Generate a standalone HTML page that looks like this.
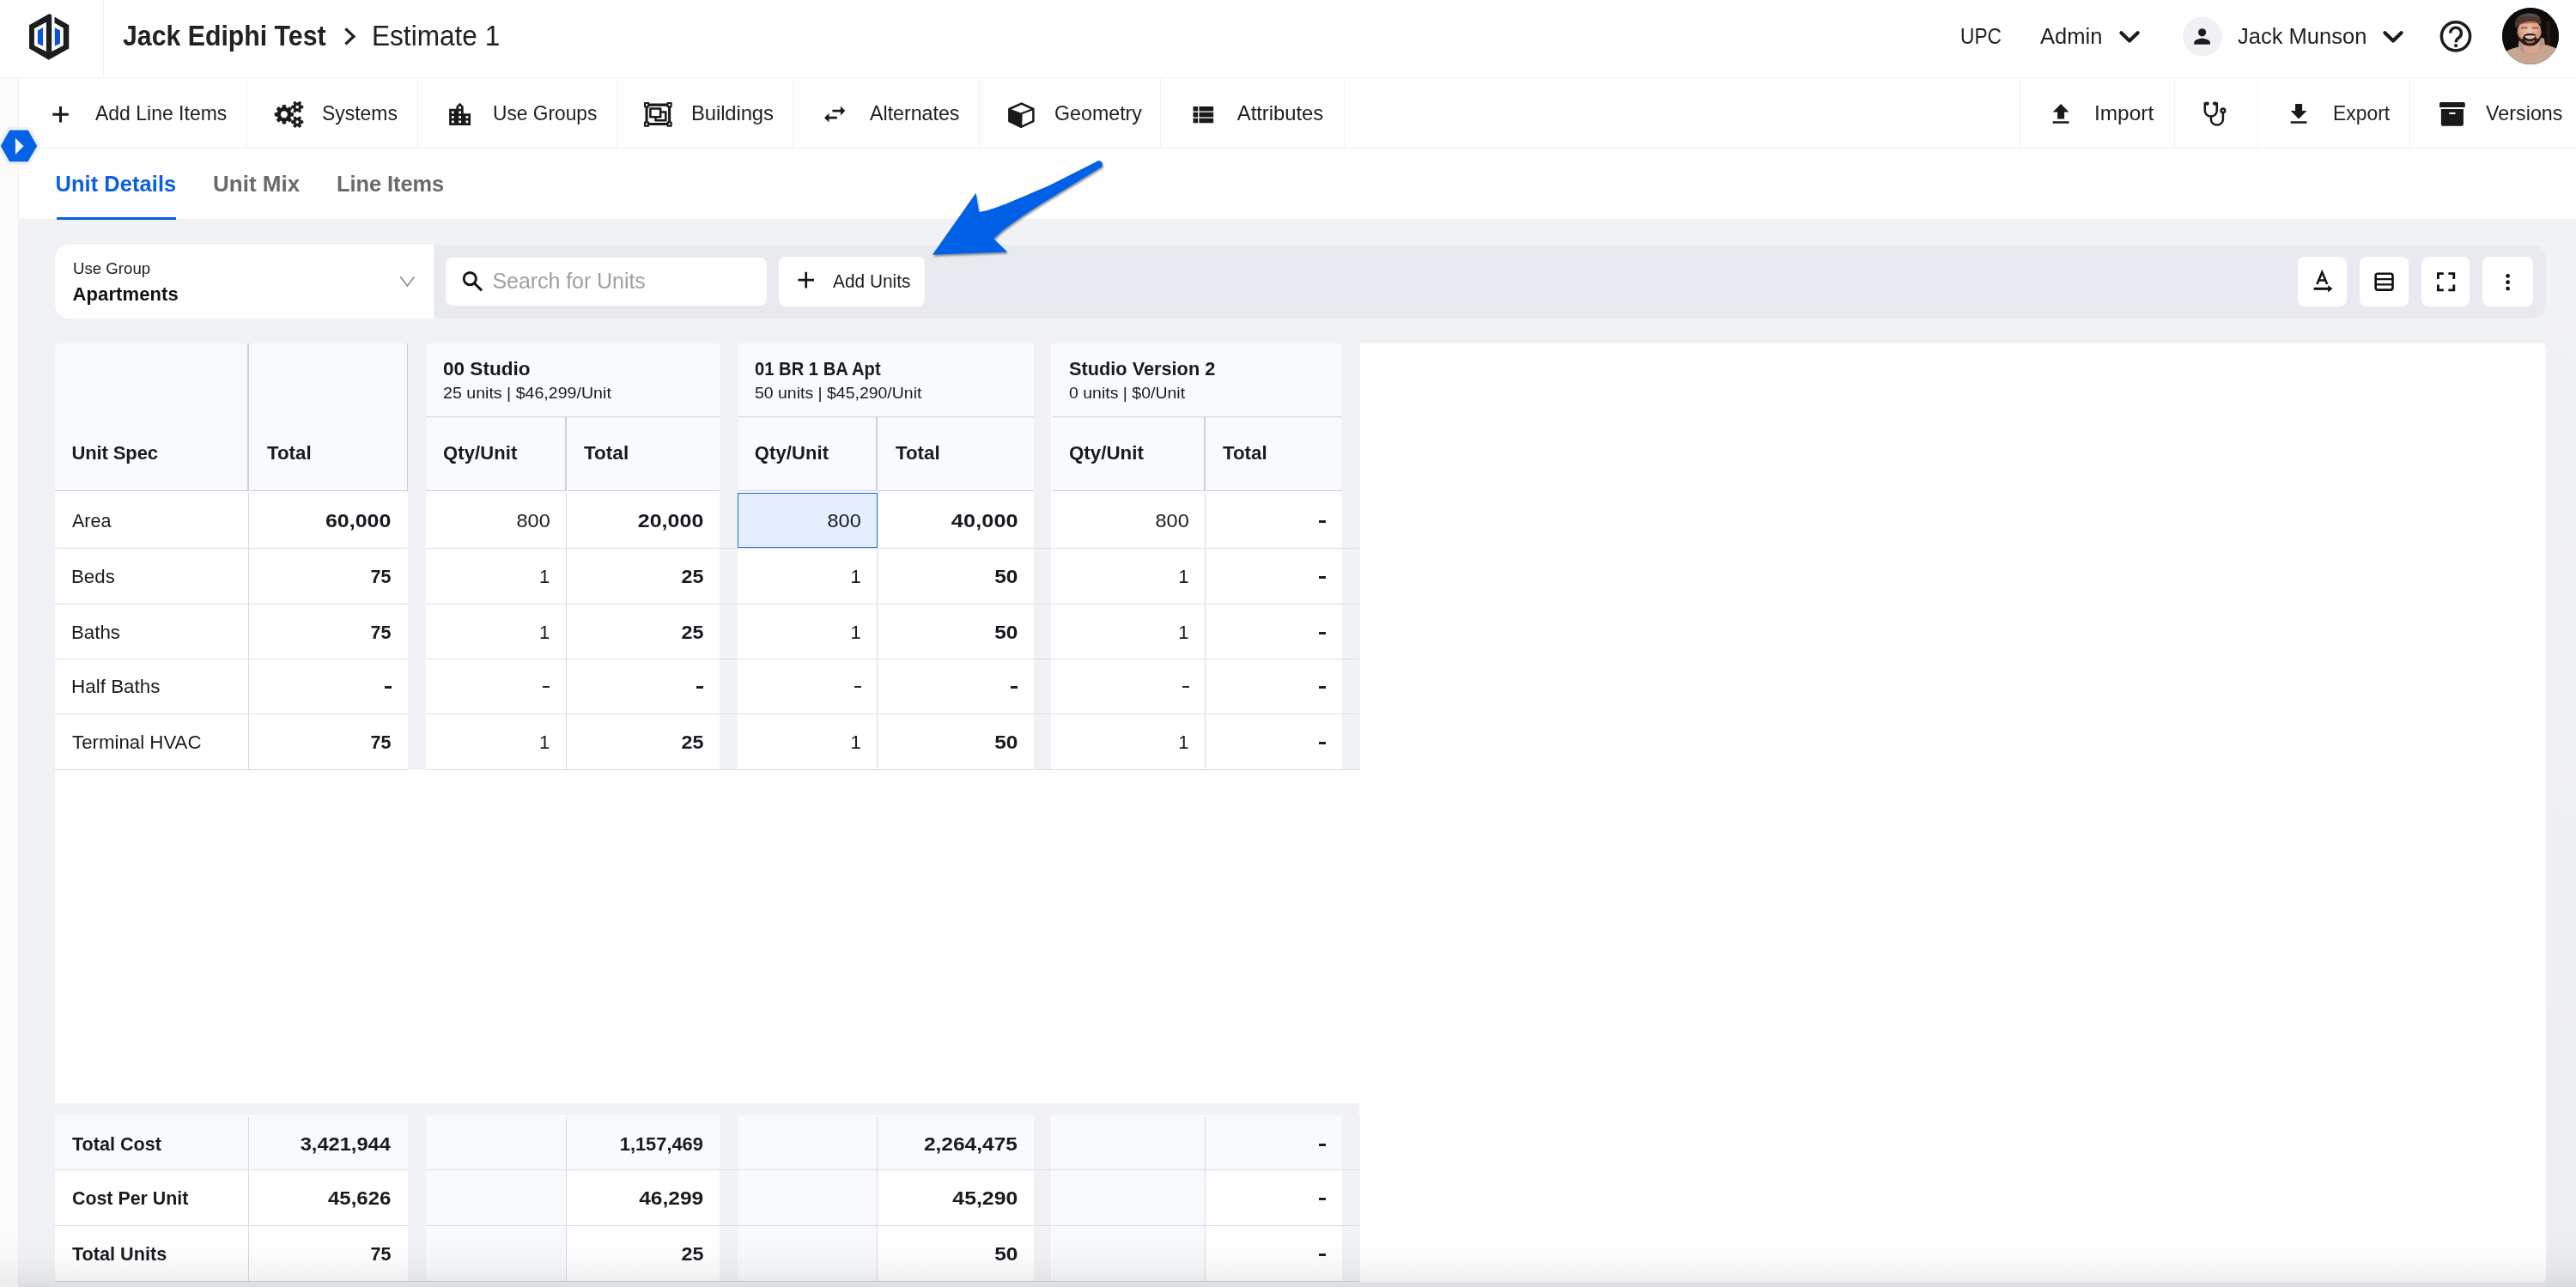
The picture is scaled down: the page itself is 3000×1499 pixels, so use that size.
<!DOCTYPE html>
<html lang="en"><head><meta charset="utf-8"><title>Estimate 1 - Unit Details</title>
<style>
html,body{margin:0;padding:0}
body{width:3000px;height:1499px;position:relative;overflow:hidden;background:#f1f2f6;font-family:"Liberation Sans", sans-serif;color:#171b20}
.abs{position:absolute;display:block}
.t{position:absolute;white-space:pre;line-height:1;display:block}
.txt{left:0;top:0;width:3000px;height:1499px;will-change:transform}
</style></head>
<body>
<!-- layout boxes -->
<div class="abs" style="left:0px;top:0px;width:3000px;height:90px;background:#fff"></div>
<div class="abs" style="left:0px;top:90px;width:3000px;height:1px;background:#eff0f4"></div>
<div class="abs" style="left:120px;top:0px;width:1px;height:90px;background:#f1f2f5"></div>
<div class="abs" style="left:0px;top:91px;width:3000px;height:81px;background:#fefefe"></div>
<div class="abs" style="left:0px;top:172px;width:3000px;height:1px;background:#eeeff3"></div>
<div class="abs" style="left:0px;top:173px;width:3000px;height:82px;background:#fefefe"></div>
<div class="abs" style="left:0px;top:91px;width:21px;height:1408px;background:#fbfbfc"></div>
<div class="abs" style="left:21px;top:91px;width:1px;height:1408px;background:#eff0f4"></div>
<div class="abs" style="left:287px;top:91px;width:1px;height:81px;background:#f0f1f5"></div>
<div class="abs" style="left:486px;top:91px;width:1px;height:81px;background:#f0f1f5"></div>
<div class="abs" style="left:718px;top:91px;width:1px;height:81px;background:#f0f1f5"></div>
<div class="abs" style="left:923px;top:91px;width:1px;height:81px;background:#f0f1f5"></div>
<div class="abs" style="left:1140px;top:91px;width:1px;height:81px;background:#f0f1f5"></div>
<div class="abs" style="left:1351px;top:91px;width:1px;height:81px;background:#f0f1f5"></div>
<div class="abs" style="left:1564.5px;top:91px;width:1px;height:81px;background:#f0f1f5"></div>
<div class="abs" style="left:2351.5px;top:91px;width:1px;height:81px;background:#f0f1f5"></div>
<div class="abs" style="left:2531.5px;top:91px;width:1px;height:81px;background:#f0f1f5"></div>
<div class="abs" style="left:2628.5px;top:91px;width:1px;height:81px;background:#f0f1f5"></div>
<div class="abs" style="left:2806.4px;top:91px;width:1px;height:81px;background:#f0f1f5"></div>
<div class="abs" style="left:65.5px;top:252.5px;width:139.5px;height:3.5px;background:#0b5fe4"></div>
<div class="abs" style="left:64px;top:285px;width:2901px;height:86px;background:#e9eaef;border-radius:16px"></div>
<div class="abs" style="left:64px;top:285px;width:440.5px;height:86px;background:#fff;border-radius:16px 0 0 16px"></div>
<div class="abs" style="left:519px;top:300px;width:373.5px;height:56px;background:#fff;border-radius:8px"></div>
<div class="abs" style="left:907px;top:298.8px;width:170px;height:58.4px;background:#fff;border-radius:8px"></div>
<div class="abs" style="left:2676px;top:299.2px;width:57px;height:58px;background:#fff;border-radius:8px"></div>
<div class="abs" style="left:2748.2px;top:299.2px;width:57px;height:58px;background:#fff;border-radius:8px"></div>
<div class="abs" style="left:2820px;top:299.2px;width:56.2px;height:58px;background:#fff;border-radius:8px"></div>
<div class="abs" style="left:2891px;top:299.2px;width:59px;height:58px;background:#fff;border-radius:8px"></div>
<div class="abs" style="left:64px;top:400px;width:2901px;height:1092.5px;background:#fff;border-radius:6px"></div>
<div class="abs" style="left:474.5px;top:400px;width:21.5px;height:497px;background:#f1f2f6"></div>
<div class="abs" style="left:474.5px;top:1299px;width:21.5px;height:193.5px;background:#f1f2f6"></div>
<div class="abs" style="left:837.5px;top:400px;width:21.3px;height:497px;background:#f1f2f6"></div>
<div class="abs" style="left:837.5px;top:1299px;width:21.3px;height:193.5px;background:#f1f2f6"></div>
<div class="abs" style="left:1203.8px;top:400px;width:20.7px;height:497px;background:#f1f2f6"></div>
<div class="abs" style="left:1203.8px;top:1299px;width:20.7px;height:193.5px;background:#f1f2f6"></div>
<div class="abs" style="left:1562.5px;top:400px;width:21.4px;height:497px;background:#f1f2f6"></div>
<div class="abs" style="left:1562.5px;top:1299px;width:21.4px;height:193.5px;background:#f1f2f6"></div>
<div class="abs" style="left:64px;top:400px;width:410.5px;height:171px;background:#f9fafe"></div>
<div class="abs" style="left:496px;top:400px;width:341.5px;height:171px;background:#f9fafe"></div>
<div class="abs" style="left:858.8px;top:400px;width:345px;height:171px;background:#f9fafe"></div>
<div class="abs" style="left:1224.5px;top:400px;width:338px;height:171px;background:#f9fafe"></div>
<div class="abs" style="left:64px;top:400px;width:4px;height:4px;background:#f1f2f6"></div>
<div class="abs" style="left:64px;top:400px;width:410.5px;height:171px;background:#f9fafe;border-radius:5px 0 0 0"></div>
<div class="abs" style="left:496px;top:484.8px;width:341.5px;height:1.2px;background:#cfd3dd"></div>
<div class="abs" style="left:657.85px;top:486px;width:2px;height:85px;background:#cbd0da"></div>
<div class="abs" style="left:858.8px;top:484.8px;width:345px;height:1.2px;background:#cfd3dd"></div>
<div class="abs" style="left:1020.35px;top:486px;width:2px;height:85px;background:#cbd0da"></div>
<div class="abs" style="left:1224.5px;top:484.8px;width:338px;height:1.2px;background:#cfd3dd"></div>
<div class="abs" style="left:1401.6px;top:486px;width:2px;height:85px;background:#cbd0da"></div>
<div class="abs" style="left:288px;top:400px;width:2px;height:171px;background:#cbd0da"></div>
<div class="abs" style="left:474px;top:400px;width:1px;height:171px;background:#cbd0da"></div>
<div class="abs" style="left:64px;top:570.8px;width:410.5px;height:1.3px;background:#cfd3dd"></div>
<div class="abs" style="left:64px;top:572.1px;width:410.5px;height:2px;background:#fbfbfe"></div>
<div class="abs" style="left:496px;top:570.8px;width:341.5px;height:1.3px;background:#cfd3dd"></div>
<div class="abs" style="left:496px;top:572.1px;width:341.5px;height:2px;background:#fbfbfe"></div>
<div class="abs" style="left:858.8px;top:570.8px;width:345px;height:1.3px;background:#cfd3dd"></div>
<div class="abs" style="left:858.8px;top:572.1px;width:345px;height:2px;background:#fbfbfe"></div>
<div class="abs" style="left:1224.5px;top:570.8px;width:338px;height:1.3px;background:#cfd3dd"></div>
<div class="abs" style="left:1224.5px;top:572.1px;width:338px;height:2px;background:#fbfbfe"></div>
<div class="abs" style="left:64px;top:637.8px;width:410.5px;height:1.2px;background:#dadde5"></div>
<div class="abs" style="left:64px;top:702.6px;width:410.5px;height:1.2px;background:#dadde5"></div>
<div class="abs" style="left:64px;top:766.6px;width:410.5px;height:1.2px;background:#dadde5"></div>
<div class="abs" style="left:64px;top:831.2px;width:410.5px;height:1.2px;background:#dadde5"></div>
<div class="abs" style="left:64px;top:896px;width:410.5px;height:1.2px;background:#dadde5"></div>
<div class="abs" style="left:288.85px;top:574px;width:1.1px;height:322px;background:#d5d9e1"></div>
<div class="abs" style="left:496px;top:637.8px;width:341.5px;height:1.2px;background:#dadde5"></div>
<div class="abs" style="left:496px;top:702.6px;width:341.5px;height:1.2px;background:#dadde5"></div>
<div class="abs" style="left:496px;top:766.6px;width:341.5px;height:1.2px;background:#dadde5"></div>
<div class="abs" style="left:496px;top:831.2px;width:341.5px;height:1.2px;background:#dadde5"></div>
<div class="abs" style="left:496px;top:896px;width:341.5px;height:1.2px;background:#dadde5"></div>
<div class="abs" style="left:658.85px;top:574px;width:1.1px;height:322px;background:#d5d9e1"></div>
<div class="abs" style="left:858.8px;top:637.8px;width:345px;height:1.2px;background:#dadde5"></div>
<div class="abs" style="left:858.8px;top:702.6px;width:345px;height:1.2px;background:#dadde5"></div>
<div class="abs" style="left:858.8px;top:766.6px;width:345px;height:1.2px;background:#dadde5"></div>
<div class="abs" style="left:858.8px;top:831.2px;width:345px;height:1.2px;background:#dadde5"></div>
<div class="abs" style="left:858.8px;top:896px;width:345px;height:1.2px;background:#dadde5"></div>
<div class="abs" style="left:1021.35px;top:574px;width:1.1px;height:322px;background:#d5d9e1"></div>
<div class="abs" style="left:1224.5px;top:637.8px;width:338px;height:1.2px;background:#dadde5"></div>
<div class="abs" style="left:1224.5px;top:702.6px;width:338px;height:1.2px;background:#dadde5"></div>
<div class="abs" style="left:1224.5px;top:766.6px;width:338px;height:1.2px;background:#dadde5"></div>
<div class="abs" style="left:1224.5px;top:831.2px;width:338px;height:1.2px;background:#dadde5"></div>
<div class="abs" style="left:1224.5px;top:896px;width:338px;height:1.2px;background:#dadde5"></div>
<div class="abs" style="left:1402.6px;top:574px;width:1.1px;height:322px;background:#d5d9e1"></div>
<div class="abs" style="left:496px;top:637.8px;width:1087.3px;height:1.2px;background:#dadde5"></div>
<div class="abs" style="left:496px;top:702.6px;width:1087.3px;height:1.2px;background:#dadde5"></div>
<div class="abs" style="left:496px;top:766.6px;width:1087.3px;height:1.2px;background:#dadde5"></div>
<div class="abs" style="left:496px;top:831.2px;width:1087.3px;height:1.2px;background:#dadde5"></div>
<div class="abs" style="left:496px;top:896px;width:1087.3px;height:1.2px;background:#dadde5"></div>
<div class="abs" style="left:858.8px;top:573.6px;width:162.8px;height:64.2px;background:#e5eefc;border:1.3px solid #1766e8;box-sizing:border-box"></div>
<div class="abs" style="left:64px;top:1284.6px;width:1519.3px;height:14.6px;background:#f1f2f6"></div>
<div class="abs" style="left:64px;top:1299.2px;width:410.5px;height:63.5px;background:#f9fafe"></div>
<div class="abs" style="left:496px;top:1299.2px;width:341.5px;height:63.5px;background:#f9fafe"></div>
<div class="abs" style="left:858.8px;top:1299.2px;width:345px;height:63.5px;background:#f9fafe"></div>
<div class="abs" style="left:1224.5px;top:1299.2px;width:338px;height:63.5px;background:#f9fafe"></div>
<div class="abs" style="left:496px;top:1362.3px;width:162.75px;height:130.2px;background:#f9fafe"></div>
<div class="abs" style="left:858.8px;top:1362.3px;width:162.45px;height:130.2px;background:#f9fafe"></div>
<div class="abs" style="left:1224.5px;top:1362.3px;width:178px;height:130.2px;background:#f9fafe"></div>
<div class="abs" style="left:64px;top:1361.7px;width:410.5px;height:1.2px;background:#dadde5"></div>
<div class="abs" style="left:64px;top:1426.8px;width:410.5px;height:1.2px;background:#dadde5"></div>
<div class="abs" style="left:288.85px;top:1300.5px;width:1.1px;height:192px;background:#d5d9e1"></div>
<div class="abs" style="left:496px;top:1361.7px;width:341.5px;height:1.2px;background:#dadde5"></div>
<div class="abs" style="left:496px;top:1426.8px;width:341.5px;height:1.2px;background:#dadde5"></div>
<div class="abs" style="left:658.85px;top:1300.5px;width:1.1px;height:192px;background:#d5d9e1"></div>
<div class="abs" style="left:858.8px;top:1361.7px;width:345px;height:1.2px;background:#dadde5"></div>
<div class="abs" style="left:858.8px;top:1426.8px;width:345px;height:1.2px;background:#dadde5"></div>
<div class="abs" style="left:1021.35px;top:1300.5px;width:1.1px;height:192px;background:#d5d9e1"></div>
<div class="abs" style="left:1224.5px;top:1361.7px;width:338px;height:1.2px;background:#dadde5"></div>
<div class="abs" style="left:1224.5px;top:1426.8px;width:338px;height:1.2px;background:#dadde5"></div>
<div class="abs" style="left:1402.6px;top:1300.5px;width:1.1px;height:192px;background:#d5d9e1"></div>
<div class="abs" style="left:496px;top:1361.7px;width:1087.3px;height:1.2px;background:#dadde5"></div>
<div class="abs" style="left:496px;top:1426.8px;width:1087.3px;height:1.2px;background:#dadde5"></div>
<div class="abs" style="left:64px;top:1491.8px;width:1519.3px;height:1.2px;background:#cfd3dc"></div>
<div class="abs" style="left:0px;top:1434px;width:3000px;height:65px;background:linear-gradient(to bottom,rgba(20,22,30,0) 0%,rgba(20,22,30,0.012) 35%,rgba(20,22,30,0.04) 70%,rgba(20,22,30,0.085) 100%)"></div>
<div class="abs" style="left:21px;top:1492.6px;width:2979px;height:6.4px;background:linear-gradient(to bottom,#e2e3e7,#dcdde1)"></div>
<div class="abs" style="left:0px;top:1492.6px;width:21px;height:6.4px;background:#ededee"></div>
<div class="abs" style="left:2966px;top:255px;width:34px;height:1244px;background:linear-gradient(to bottom,rgba(20,22,30,0) 0%,rgba(20,22,30,0.018) 100%)"></div>
<div class="abs" style="left:1536px;top:606px;width:8px;height:3px;background:#1b1f24"></div>
<div class="abs" style="left:1536px;top:671px;width:8px;height:3px;background:#1b1f24"></div>
<div class="abs" style="left:1536px;top:736px;width:8px;height:3px;background:#1b1f24"></div>
<div class="abs" style="left:448px;top:799px;width:8px;height:3px;background:#1b1f24"></div>
<div class="abs" style="left:632px;top:799px;width:8px;height:2px;background:#24282d"></div>
<div class="abs" style="left:811px;top:799px;width:8px;height:3px;background:#1b1f24"></div>
<div class="abs" style="left:995px;top:799px;width:8px;height:2px;background:#24282d"></div>
<div class="abs" style="left:1177px;top:799px;width:8px;height:3px;background:#1b1f24"></div>
<div class="abs" style="left:1377px;top:799px;width:8px;height:2px;background:#24282d"></div>
<div class="abs" style="left:1536px;top:799px;width:8px;height:3px;background:#1b1f24"></div>
<div class="abs" style="left:1536px;top:864px;width:8px;height:3px;background:#1b1f24"></div>
<div class="abs" style="left:1536px;top:1332px;width:8px;height:3px;background:#1b1f24"></div>
<div class="abs" style="left:1536px;top:1395px;width:8px;height:3px;background:#1b1f24"></div>
<div class="abs" style="left:1536px;top:1460px;width:8px;height:3px;background:#1b1f24"></div>
<!-- text -->
<div class="abs txt">
<span class="t" style="left:142.5px;top:25.07px;font-size:33px;font-weight:700;color:#202124;transform:scaleX(0.917);transform-origin:0 50%;">Jack Ediphi Test</span>
<span class="t" style="left:433.09px;top:25.07px;font-size:33px;color:#202124;transform:scaleX(0.957);transform-origin:0 50%;">Estimate 1</span>
<span class="t" style="left:2283.49px;top:29.84px;font-size:25px;color:#1e1f21;transform:scaleX(0.909);transform-origin:0 50%;">UPC</span>
<span class="t" style="left:2376px;top:29.84px;font-size:25px;color:#1e1f21;transform:scaleX(1.021);transform-origin:0 50%;">Admin</span>
<span class="t" style="left:2606px;top:29.84px;font-size:25px;color:#1e1f21;transform:scaleX(1.021);transform-origin:0 50%;">Jack Munson</span>
<span class="t" style="left:111px;top:119.97px;font-size:23.9px;color:#1e1f21;transform:scaleX(0.962);transform-origin:0 50%;">Add Line Items</span>
<span class="t" style="left:375.04px;top:119.97px;font-size:23.9px;color:#1e1f21;transform:scaleX(0.960);transform-origin:0 50%;">Systems</span>
<span class="t" style="left:574.05px;top:119.97px;font-size:23.9px;color:#1e1f21;transform:scaleX(0.952);transform-origin:0 50%;">Use Groups</span>
<span class="t" style="left:805px;top:119.97px;font-size:23.9px;letter-spacing:-0.13px;color:#1e1f21;">Buildings</span>
<span class="t" style="left:1012.5px;top:119.97px;font-size:23.9px;color:#1e1f21;transform:scaleX(0.971);transform-origin:0 50%;">Alternates</span>
<span class="t" style="left:1228.03px;top:119.97px;font-size:23.9px;color:#1e1f21;transform:scaleX(0.972);transform-origin:0 50%;">Geometry</span>
<span class="t" style="left:1440.8px;top:119.97px;font-size:23.9px;letter-spacing:-0.06px;color:#1e1f21;">Attributes</span>
<span class="t" style="left:2438.96px;top:119.97px;font-size:23.9px;color:#1e1f21;transform:scaleX(1.022);transform-origin:0 50%;">Import</span>
<span class="t" style="left:2717.44px;top:119.97px;font-size:23.9px;color:#1e1f21;transform:scaleX(0.959);transform-origin:0 50%;">Export</span>
<span class="t" style="left:2895px;top:119.97px;font-size:23.9px;color:#1e1f21;transform:scaleX(0.977);transform-origin:0 50%;">Versions</span>
<span class="t" style="left:64.5px;top:201.8px;font-size:25.4px;font-weight:700;letter-spacing:0.09px;color:#0b5fe4;">Unit Details</span>
<span class="t" style="left:247.98px;top:201.8px;font-size:25.4px;font-weight:700;color:#696a6c;transform:scaleX(1.024);transform-origin:0 50%;">Unit Mix</span>
<span class="t" style="left:392px;top:201.8px;font-size:25.4px;font-weight:700;letter-spacing:-0.05px;color:#696a6c;">Line Items</span>
<span class="t" style="left:84.98px;top:303.79px;font-size:18.2px;transform:scaleX(1.025);transform-origin:0 50%;">Use Group</span>
<span class="t" style="left:84.5px;top:331.88px;font-size:22px;font-weight:700;letter-spacing:0.11px;color:#101214;">Apartments</span>
<span class="t" style="left:573.5px;top:314.84px;font-size:25px;letter-spacing:-0.06px;color:#a0a0a2;">Search for Units</span>
<span class="t" style="left:970px;top:315.92px;font-size:22.9px;color:#1e1f21;transform:scaleX(0.911);transform-origin:0 50%;">Add Units</span>
<span class="t" style="left:83.5px;top:517.48px;font-size:22px;font-weight:700;letter-spacing:-0.12px;">Unit Spec</span>
<span class="t" style="left:310.5px;top:517.48px;font-size:22px;font-weight:700;transform:scaleX(1.014);transform-origin:0 50%;">Total</span>
<span class="t" style="left:516px;top:419.48px;font-size:22px;font-weight:700;transform:scaleX(1.025);transform-origin:0 50%;">00 Studio</span>
<span class="t" style="left:516px;top:448.77px;font-size:18.4px;transform:scaleX(1.066);transform-origin:0 50%;">25 units | $46,299/Unit</span>
<span class="t" style="left:516px;top:517.48px;font-size:22px;font-weight:700;letter-spacing:0.11px;">Qty/Unit</span>
<span class="t" style="left:680px;top:517.48px;font-size:22px;font-weight:700;transform:scaleX(1.024);transform-origin:0 50%;">Total</span>
<span class="t" style="left:878.75px;top:419.48px;font-size:22px;font-weight:700;transform:scaleX(0.918);transform-origin:0 50%;">01 BR 1 BA Apt</span>
<span class="t" style="left:878.75px;top:448.77px;font-size:18.4px;transform:scaleX(1.058);transform-origin:0 50%;">50 units | $45,290/Unit</span>
<span class="t" style="left:878.75px;top:517.48px;font-size:22px;font-weight:700;letter-spacing:0.11px;">Qty/Unit</span>
<span class="t" style="left:1043px;top:517.48px;font-size:22px;font-weight:700;transform:scaleX(1.014);transform-origin:0 50%;">Total</span>
<span class="t" style="left:1245px;top:419.48px;font-size:22px;font-weight:700;transform:scaleX(0.988);transform-origin:0 50%;">Studio Version 2</span>
<span class="t" style="left:1245px;top:448.77px;font-size:18.4px;transform:scaleX(1.060);transform-origin:0 50%;">0 units | $0/Unit</span>
<span class="t" style="left:1245px;top:517.48px;font-size:22px;font-weight:700;transform:scaleX(1.015);transform-origin:0 50%;">Qty/Unit</span>
<span class="t" style="left:1424px;top:517.48px;font-size:22px;font-weight:700;transform:scaleX(1.014);transform-origin:0 50%;">Total</span>
<span class="t" style="left:84px;top:595.98px;font-size:22px;transform:scaleX(0.978);transform-origin:0 50%;">Area</span>
<span class="t" style="left:388.38px;top:595.98px;font-size:22px;font-weight:700;transform:scaleX(1.135);transform-origin:100% 50%;">60,000</span>
<span class="t" style="left:603.55px;top:595.98px;font-size:22px;transform:scaleX(1.069);transform-origin:100% 50%;">800</span>
<span class="t" style="left:751.73px;top:595.98px;font-size:22px;font-weight:700;transform:scaleX(1.137);transform-origin:100% 50%;">20,000</span>
<span class="t" style="left:966.15px;top:595.98px;font-size:22px;transform:scaleX(1.069);transform-origin:100% 50%;">800</span>
<span class="t" style="left:1117.65px;top:595.98px;font-size:22px;font-weight:700;letter-spacing:0.07px;transform:scaleX(1.150);transform-origin:100% 50%;">40,000</span>
<span class="t" style="left:1347.75px;top:595.98px;font-size:22px;transform:scaleX(1.069);transform-origin:100% 50%;">800</span>
<span class="t" style="left:82.99px;top:660.98px;font-size:22px;transform:scaleX(1.013);transform-origin:0 50%;">Beds</span>
<span class="t" style="left:431.16px;top:660.98px;font-size:22px;font-weight:700;transform:scaleX(0.978);transform-origin:100% 50%;">75</span>
<span class="t" style="left:628px;top:660.98px;font-size:22px;letter-spacing:0.9px;">1</span>
<span class="t" style="left:794.53px;top:660.98px;font-size:22px;font-weight:700;transform:scaleX(1.062);transform-origin:100% 50%;">25</span>
<span class="t" style="left:990.6px;top:660.98px;font-size:22px;letter-spacing:0.9px;">1</span>
<span class="t" style="left:1160.79px;top:660.98px;font-size:22px;font-weight:700;transform:scaleX(1.114);transform-origin:100% 50%;">50</span>
<span class="t" style="left:1372.2px;top:660.98px;font-size:22px;letter-spacing:0.9px;">1</span>
<span class="t" style="left:82.99px;top:725.78px;font-size:22px;transform:scaleX(1.013);transform-origin:0 50%;">Baths</span>
<span class="t" style="left:431.16px;top:725.78px;font-size:22px;font-weight:700;transform:scaleX(0.978);transform-origin:100% 50%;">75</span>
<span class="t" style="left:628px;top:725.78px;font-size:22px;letter-spacing:0.9px;">1</span>
<span class="t" style="left:794.53px;top:725.78px;font-size:22px;font-weight:700;transform:scaleX(1.062);transform-origin:100% 50%;">25</span>
<span class="t" style="left:990.6px;top:725.78px;font-size:22px;letter-spacing:0.9px;">1</span>
<span class="t" style="left:1160.79px;top:725.78px;font-size:22px;font-weight:700;transform:scaleX(1.114);transform-origin:100% 50%;">50</span>
<span class="t" style="left:1372.2px;top:725.78px;font-size:22px;letter-spacing:0.9px;">1</span>
<span class="t" style="left:82.98px;top:788.98px;font-size:22px;transform:scaleX(1.020);transform-origin:0 50%;">Half Baths</span>
<span class="t" style="left:84px;top:853.98px;font-size:22px;transform:scaleX(1.012);transform-origin:0 50%;">Terminal HVAC</span>
<span class="t" style="left:431.16px;top:853.98px;font-size:22px;font-weight:700;transform:scaleX(0.978);transform-origin:100% 50%;">75</span>
<span class="t" style="left:628px;top:853.98px;font-size:22px;letter-spacing:0.9px;">1</span>
<span class="t" style="left:794.53px;top:853.98px;font-size:22px;font-weight:700;transform:scaleX(1.062);transform-origin:100% 50%;">25</span>
<span class="t" style="left:990.6px;top:853.98px;font-size:22px;letter-spacing:0.9px;">1</span>
<span class="t" style="left:1160.79px;top:853.98px;font-size:22px;font-weight:700;transform:scaleX(1.114);transform-origin:100% 50%;">50</span>
<span class="t" style="left:1372.2px;top:853.98px;font-size:22px;letter-spacing:0.9px;">1</span>
<span class="t" style="left:84px;top:1321.78px;font-size:22px;font-weight:700;transform:scaleX(0.982);transform-origin:0 50%;">Total Cost</span>
<span class="t" style="left:356.71px;top:1321.78px;font-size:22px;font-weight:700;transform:scaleX(1.075);transform-origin:100% 50%;">3,421,944</span>
<span class="t" style="left:721.11px;top:1321.78px;font-size:22px;font-weight:700;transform:scaleX(0.992);transform-origin:100% 50%;">1,157,469</span>
<span class="t" style="left:1087.39px;top:1321.78px;font-size:22px;font-weight:700;transform:scaleX(1.113);transform-origin:100% 50%;">2,264,475</span>
<span class="t" style="left:84px;top:1384.68px;font-size:22px;font-weight:700;transform:scaleX(0.971);transform-origin:0 50%;">Cost Per Unit</span>
<span class="t" style="left:388.37px;top:1384.68px;font-size:22px;font-weight:700;transform:scaleX(1.089);transform-origin:100% 50%;">45,626</span>
<span class="t" style="left:751.72px;top:1384.68px;font-size:22px;font-weight:700;transform:scaleX(1.117);transform-origin:100% 50%;">46,299</span>
<span class="t" style="left:1117.98px;top:1384.68px;font-size:22px;font-weight:700;transform:scaleX(1.129);transform-origin:100% 50%;">45,290</span>
<span class="t" style="left:84px;top:1449.58px;font-size:22px;font-weight:700;transform:scaleX(0.984);transform-origin:0 50%;">Total Units</span>
<span class="t" style="left:431.16px;top:1449.58px;font-size:22px;font-weight:700;transform:scaleX(0.978);transform-origin:100% 50%;">75</span>
<span class="t" style="left:794.53px;top:1449.58px;font-size:22px;font-weight:700;transform:scaleX(1.062);transform-origin:100% 50%;">25</span>
<span class="t" style="left:1160.79px;top:1449.58px;font-size:22px;font-weight:700;transform:scaleX(1.114);transform-origin:100% 50%;">50</span>
</div>
<!-- icons -->
<svg class="abs" style="left:20px;top:5px" width="80" height="80" viewBox="20 5 80 80" ><path fill="#1d1d1f" fill-rule="evenodd" d="M57.3,15.9 L34,29.2 L34,56.4 L56.7,69.8 L80.3,56.4 L80.3,29.2 L63.5,19.5 L63.5,26.8 L73.8,32.7 L73.8,52.9 L60.2,60 L60.2,17.6 Z M39.9,33.3 L53.9,25.8 L53.9,60 L39.9,52.9 Z"/><path fill="#0a55d6" d="M43.9,35.5 L50.1,32 L50.1,53.8 L43.9,50.7 Z M63.8,32 L70,35.5 L70,50.7 L63.8,53.8 Z"/></svg>
<svg class="abs" style="left:396px;top:28px" width="24" height="30" viewBox="396 28 24 30" ><path d="M402.4,33.4 L411.9,42.4 L402.4,51.4" fill="none" stroke="#202124" stroke-width="3.3" stroke-linecap="butt" stroke-linejoin="miter"/></svg>
<svg class="abs" style="left:2465.5px;top:32px" width="28" height="24" viewBox="2465.5 32 28 24" ><path d="M2469.9,38.3 L2479.5,47.6 L2489.1,38.3" fill="none" stroke="#1c1c1e" stroke-width="4.2" stroke-linecap="round" stroke-linejoin="round"/></svg>
<svg class="abs" style="left:2773.1px;top:32px" width="28" height="24" viewBox="2773.1 32 28 24" ><path d="M2777.5,38.3 L2787.1,47.6 L2796.7,38.3" fill="none" stroke="#1c1c1e" stroke-width="4.2" stroke-linecap="round" stroke-linejoin="round"/></svg>
<svg class="abs" style="left:2541px;top:18px" width="48" height="48" viewBox="2541 18 48 48" ><circle cx="2565" cy="42.5" r="23" fill="#f0f1f5"/><circle cx="2564.6" cy="37.8" r="4.6" fill="#1c1c1e"/><path d="M2555.3,51.8 v-2.3 c0,-3.1 6.2,-4.7 9.3,-4.7 s9.3,1.6 9.3,4.7 v2.3 z" fill="#1c1c1e"/></svg>
<svg class="abs" style="left:2838px;top:20px" width="44" height="44" viewBox="2838 20 44 44" ><circle cx="2860" cy="42.3" r="16.6" fill="none" stroke="#1c1c1e" stroke-width="3.5"/><path d="M2853.6,38.6 a6.4,6.4 0 1 1 10.4,5 c-2.2,1.7 -3.8,2.7 -3.8,5.6" fill="none" stroke="#1c1c1e" stroke-width="3.4"/><rect x="2858.3" y="51.3" width="3.6" height="3.6" fill="#1c1c1e"/></svg>
<svg class="abs" style="left:2914px;top:9px" width="66" height="66" viewBox="0 0 66 66" ><defs><clipPath id="av"><circle cx="33" cy="33" r="33"/></clipPath><filter id="avb" x="-5%" y="-5%" width="110%" height="110%"><feGaussianBlur stdDeviation="0.75"/></filter><radialGradient id="avf" cx="0.5" cy="0.42" r="0.6"><stop offset="0" stop-color="#f0c0ac"/><stop offset="0.6" stop-color="#dea28b"/><stop offset="1" stop-color="#b9745c"/></radialGradient></defs><g clip-path="url(#av)"><rect width="66" height="66" fill="#0c0a08"/><g filter="url(#avb)"><rect x="-2" y="-2" width="70" height="70" fill="#0d0b09"/><rect x="0" y="14" width="16" height="40" fill="#0d100b"/><rect x="51.5" y="15" width="4.6" height="31" fill="#2a1810"/><path d="M-2,70 L-2,56 C4,50 12,47 19,45.5 L19.5,40 C21,37 24,37 25.5,39 L43,38 C44,35 47,34.5 49,36 L49.5,42.8 C54,44 60,45.5 68,50 L68,70 Z" fill="#c6a693"/><path d="M19,45.5 C22,50 27,55 33,57 C39,54 45,48 49.5,42.8 L49,36 C47,34.5 44,35 43,38 L43,46 L25.5,47 L25.5,39 C24,37 21,37 19.5,40 Z" fill="#b89786"/><path d="M25.5,40 L43.5,39 L43.5,50 C39,54.5 30,55 25.5,50 Z" fill="#d9a48d"/><path d="M26,51.5 C31,55.5 38,55 43.5,50.5 L44,53 C38,58 31,58 25.5,54 Z" fill="#c8a08e"/><ellipse cx="31.6" cy="28.6" rx="14" ry="15.2" fill="url(#avf)"/><path d="M17.8,29 C18.2,39 24,44.6 32.6,44.6 C41,44.6 45.6,38 45.6,30 C44.6,33.6 42.6,36.2 40.8,36.8 C39,32 36,30.2 32,30.6 C27.6,30.2 24.6,32 23.4,37 C20.6,35.6 18.8,32.6 17.8,29Z" fill="#2a1b15"/><path d="M26.4,33.2 C29.4,32 35.4,31.8 38.6,33 C37.4,35.8 35,36.4 32.4,36.4 C29.8,36.4 27.4,35.6 26.4,33.2Z" fill="#e8c2b6"/><path d="M26.6,37.4 C30,39.6 35,39.6 38.6,37.2 C38,40.4 35,41.6 32.4,41.6 C29.8,41.6 27.4,40.4 26.6,37.4Z" fill="#a4705f"/><path d="M24.4,32.6 C28,29.4 37,29.2 40.8,32.4 C37,31.2 28,31.4 24.4,32.6Z" fill="#2a1b15"/><path d="M22,23.6 h7.6 M34.6,23.4 h7.6" stroke="#6a4a40" stroke-width="1.5" opacity=".85"/><path d="M15.2,21.5 C13.6,12 21,6.4 30.6,6.2 C40,6 45.6,10.4 45.2,17 L45.4,20 C39,14.2 25,14.6 17.6,21.6 C17,24 16,24 15.2,21.5Z" fill="#4c3b30"/><path d="M18.6,11 C22,7.6 28,6.6 34,7 C39,7.4 43,9.4 44,12 C36,9.6 26,9.6 18.6,11Z" fill="#5d493c"/><path d="M19,20.6 C25.6,15 38,14.8 44.6,19.4 C40,17.8 26,17.2 19,20.6Z" fill="#b3502f" opacity=".75"/></g></g></svg>
<svg class="abs" style="left:58px;top:121px" width="26" height="26" viewBox="58 121 26 26" ><path d="M61.2,133.3 H79.8 M70.5,124 V142.6" stroke="#1a1a1c" stroke-width="3" fill="none"/></svg>
<svg class="abs" style="left:316px;top:114px" width="42" height="40" viewBox="316 114 42 40" ><path fill="#1a1a1c" fill-rule="evenodd" stroke="#1a1a1c" stroke-width="0.8" stroke-linejoin="round" d="M338.76,131.35 L341.65,131.51 L341.65,135.09 L338.76,135.25 L337.84,137.48 L339.77,139.64 L337.24,142.17 L335.08,140.24 L332.85,141.16 L332.69,144.05 L329.11,144.05 L328.95,141.16 L326.72,140.24 L324.56,142.17 L322.03,139.64 L323.96,137.48 L323.04,135.25 L320.15,135.09 L320.15,131.51 L323.04,131.35 L323.96,129.12 L322.03,126.96 L324.56,124.43 L326.72,126.36 L328.95,125.44 L329.11,122.55 L332.69,122.55 L332.85,125.44 L335.08,126.36 L337.24,124.43 L339.77,126.96 L337.84,129.12Z M335.30,133.30 A4.4,4.4 0 1 0 326.50,133.30 A4.4,4.4 0 1 0 335.30,133.30Z M350.49,122.95 L352.88,123.33 L352.88,125.87 L350.49,126.25 L349.77,127.49 L350.64,129.75 L348.44,131.02 L346.92,129.14 L345.48,129.14 L343.96,131.02 L341.76,129.75 L342.63,127.49 L341.91,126.25 L339.52,125.87 L339.52,123.33 L341.91,122.95 L342.63,121.71 L341.76,119.45 L343.96,118.18 L345.48,120.06 L346.92,120.06 L348.44,118.18 L350.64,119.45 L349.77,121.71Z M348.40,124.60 A2.2,2.2 0 1 0 344.00,124.60 A2.2,2.2 0 1 0 348.40,124.60Z M350.49,140.45 L352.88,140.83 L352.88,143.37 L350.49,143.75 L349.77,144.99 L350.64,147.25 L348.44,148.52 L346.92,146.64 L345.48,146.64 L343.96,148.52 L341.76,147.25 L342.63,144.99 L341.91,143.75 L339.52,143.37 L339.52,140.83 L341.91,140.45 L342.63,139.21 L341.76,136.95 L343.96,135.68 L345.48,137.56 L346.92,137.56 L348.44,135.68 L350.64,136.95 L349.77,139.21Z M348.40,142.10 A2.2,2.2 0 1 0 344.00,142.10 A2.2,2.2 0 1 0 348.40,142.10Z"/></svg>
<svg class="abs" style="left:518.9px;top:117.1px" width="33.2" height="33.2" viewBox="0 0 24 24"><path fill="#1a1a1c" d="M15 11V5l-3-3-3 3v2H3v14h18V11h-6zm-8 8H5v-2h2v2zm0-4H5v-2h2v2zm0-4H5V9h2v2zm6 8h-2v-2h2v2zm0-4h-2v-2h2v2zm0-4h-2V9h2v2zm0-4h-2V5h2v2zm6 12h-2v-2h2v2zm0-4h-2v-2h2v2z"/></svg>
<svg class="abs" style="left:956.2px;top:116.8px" width="32.3" height="32.3" viewBox="0 0 24 24"><path fill="#1a1a1c" d="M6.99 11L3 15l3.99 4v-3H14v-2H6.99v-3zM21 9l-3.99-4v3H10v2h7.01v3L21 9z"/></svg>
<svg class="abs" style="left:1383.7px;top:117.3px" width="33.3" height="33.3" viewBox="0 0 24 24"><path fill="#1a1a1c" d="M4 14h4v-4H4v4zm0 5h4v-4H4v4zM4 9h4V5H4v4zm5 5h12v-4H9v4zm0 5h12v-4H9v4zM9 5v4h12V5H9z"/></svg>
<svg class="abs" style="left:2384.3px;top:117.1px" width="32.2" height="32.2" viewBox="0 0 24 24"><path fill="#1a1a1c" d="M9 16h6v-6h4l-7-7-7 7h4zm-4 2h14v2H5z"/></svg>
<svg class="abs" style="left:2661.3px;top:117.1px" width="32.2" height="32.2" viewBox="0 0 24 24"><path fill="#1a1a1c" d="M19 9h-4V3H9v6H5l7 7 7-7zM5 18v2h14v-2H5z"/></svg>
<svg class="abs" style="left:750px;top:117.2px" width="32.7" height="32.7" viewBox="0 0 512 512"><path fill="#1a1a1c" d="M500 128c6.627 0 12-5.373 12-12V44c0-6.627-5.373-12-12-12h-72c-6.627 0-12 5.373-12 12v12H96V44c0-6.627-5.373-12-12-12H12C5.373 32 0 37.373 0 44v72c0 6.627 5.373 12 12 12h12v256H12c-6.627 0-12 5.373-12 12v72c0 6.627 5.373 12 12 12h72c6.627 0 12-5.373 12-12v-12h320v12c0 6.627 5.373 12 12 12h72c6.627 0 12-5.373 12-12v-72c0-6.627-5.373-12-12-12h-12V128h12zm-52-64h32v32h-32V64zM32 64h32v32H32V64zm32 384H32v-32h32v32zm416 0h-32v-32h32v32zm-40-64h-12c-6.627 0-12 5.373-12 12v12H96v-12c0-6.627-5.373-12-12-12H72V128h12c6.627 0 12-5.373 12-12v-12h320v12c0 6.627 5.373 12 12 12h12v256zm-36-192h-84v-52c0-6.628-5.373-12-12-12H108c-6.627 0-12 5.372-12 12v168c0 6.628 5.373 12 12 12h84v52c0 6.628 5.373 12 12 12h200c6.627 0 12-5.372 12-12V204c0-6.628-5.373-12-12-12zm-268-24h144v112H136V168zm240 176H232v-24h76c6.627 0 12-5.372 12-12v-76h56v112z"/></svg>
<svg class="abs" style="left:1170px;top:115px" width="40" height="38" viewBox="1170 115 40 38" ><path d="M1189.6,120.6 L1203.4,127 V141.1 L1189.2,147.8 L1175.4,141.1 V127 Z" fill="#fff" stroke="#1a1a1c" stroke-width="2.5" stroke-linejoin="round"/><path d="M1175.4,127 L1189.5,132.3 L1189.2,147.8 L1175.4,141.1 Z" fill="#1a1a1c" stroke="#1a1a1c" stroke-width="1.2" stroke-linejoin="round"/><path d="M1189.5,132.3 L1203.4,127 M1189.5,132.3 L1189.2,147.8" fill="none" stroke="#1a1a1c" stroke-width="2.2"/></svg>
<svg class="abs" style="left:2841px;top:117.1px" width="29.8" height="31.8" viewBox="0 0 512 512" preserveAspectRatio="none"><path fill="#1a1a1c" d="M32 448c0 17.7 14.3 32 32 32h384c17.7 0 32-14.3 32-32V160H32v288zm160-212c0-6.600 5.400-12 12-12h104c6.600 0 12 5.400 12 12v8c0 6.600-5.400 12-12 12H204c-6.600 0-12-5.400-12-12v-8zM480 32H32C14.300 32 0 46.300 0 64v48c0 8.800 7.200 16 16 16h480c8.800 0 16-7.200 16-16V64c0-17.700-14.300-32-32-32z"/></svg>
<svg class="abs" style="left:2560px;top:113px" width="40" height="38" viewBox="2560 114 40 38" ><g fill="none" stroke="#1a1a1c" stroke-width="2.5" stroke-linecap="round"><path d="M2569.6,121.4 H2567.8 V129.6 A7,7 0 0 0 2581.8,129.6 V121.4 H2580"/><path d="M2574.9,136.8 V140.2 A7,6.3 0 0 0 2588.9,140.2 V133"/><circle cx="2588.9" cy="129.7" r="2.3"/></g><ellipse cx="2570.4" cy="121.7" rx="2.4" ry="2.1" fill="#1a1a1c"/><ellipse cx="2579.3" cy="121.7" rx="2.4" ry="2.1" fill="#1a1a1c"/></svg>
<svg class="abs" style="left:-4px;top:146px" width="54" height="48" viewBox="-4 146 54 48" ><path d="M11.4,152 L32.6,152 L42.9,170 L32.3,187.9 L11.3,187.9 L1.2,170 Z" fill="#f0f1f6" stroke="#eff0f5" stroke-width="8.4" stroke-linejoin="round"/><path d="M11.4,152 L32.6,152 L42.9,170 L32.3,187.9 L11.3,187.9 L1.2,170 Z" fill="#0561e6" stroke="#0561e6" stroke-width="0.8" stroke-linejoin="round"/><path d="M17.9,160.7 L27.5,170.2 L17.9,179.9 Z" fill="#f1f3fa"/></svg>
<svg class="abs" style="left:460px;top:316px" width="30" height="24" viewBox="460 316 30 24" ><path d="M466.2,322.2 L474.4,333 L482.6,322.2" fill="none" stroke="#85878c" stroke-width="1.5"/></svg>
<svg class="abs" style="left:534px;top:312px" width="32" height="32" viewBox="534 312 32 32" ><circle cx="547.3" cy="324.6" r="7.1" fill="none" stroke="#151515" stroke-width="2.9"/><path d="M552.6,330 L561,338.3" stroke="#151515" stroke-width="3.1" fill="none"/></svg>
<svg class="abs" style="left:926px;top:313px" width="26" height="26" viewBox="926 313 26 26" ><path d="M929.5,326.1 H948 M938.7,316.8 V335.4" stroke="#151515" stroke-width="2.7" fill="none"/></svg>
<svg class="abs" style="left:2690px;top:312px" width="30" height="30" viewBox="2690 312 30 30" ><path d="M2698.4,331 L2704.3,317 L2710.2,331 M2700.4,326.6 H2708.2" fill="none" stroke="#111" stroke-width="2.5" stroke-linejoin="miter"/><path d="M2694.7,336.3 H2712.6" stroke="#111" stroke-width="3"/><path d="M2711.2,332.2 L2716.5,336.3 L2711.2,340.5 Z" fill="#111"/></svg>
<svg class="abs" style="left:2761px;top:313px" width="30" height="30" viewBox="2761 313 30 30" ><rect x="2766.7" y="318.8" width="19.8" height="18.8" rx="2.4" fill="none" stroke="#111" stroke-width="2.6"/><path d="M2766.7,325.1 H2786.5 M2766.7,331.4 H2786.5" stroke="#111" stroke-width="2.4"/></svg>
<svg class="abs" style="left:2834px;top:313px" width="30" height="30" viewBox="2834 313 30 30" ><path d="M2839.4,325 V318.6 H2845.8 M2851.4,318.6 H2857.8 V325 M2857.8,331.4 V337.8 H2851.4 M2845.8,337.8 H2839.4 V331.4" fill="none" stroke="#111" stroke-width="2.8"/></svg>
<svg class="abs" style="left:2915px;top:316px" width="12" height="26" viewBox="2915 316 12 26" ><circle cx="2920.6" cy="321.3" r="2.35" fill="#111"/><circle cx="2920.6" cy="328.7" r="2.35" fill="#111"/><circle cx="2920.6" cy="336.1" r="2.35" fill="#111"/></svg>
<svg class="abs" style="left:1070px;top:176px" width="230" height="136" viewBox="1070 176 230 136" ><defs><filter id="ash" x="-10%" y="-10%" width="125%" height="130%"><feGaussianBlur in="SourceAlpha" stdDeviation="1.1"/><feOffset dx="1.2" dy="1.8"/><feComponentTransfer><feFuncA type="linear" slope="0.42"/></feComponentTransfer><feMerge><feMergeNode/><feMergeNode in="SourceGraphic"/></feMerge></filter></defs><path d="M1085.9,296.8 L1136.5,224.8 L1140.2,247 C1156,245 1180,234 1223,215.5 L1276.5,188.4 A3.9,3.9 0 0 1 1282.6,194.8 L1234,224.6 C1205,242.5 1172,263 1157.4,278.2 L1173.2,293.6 Z" fill="#0560e6" filter="url(#ash)"/></svg>
</body></html>
